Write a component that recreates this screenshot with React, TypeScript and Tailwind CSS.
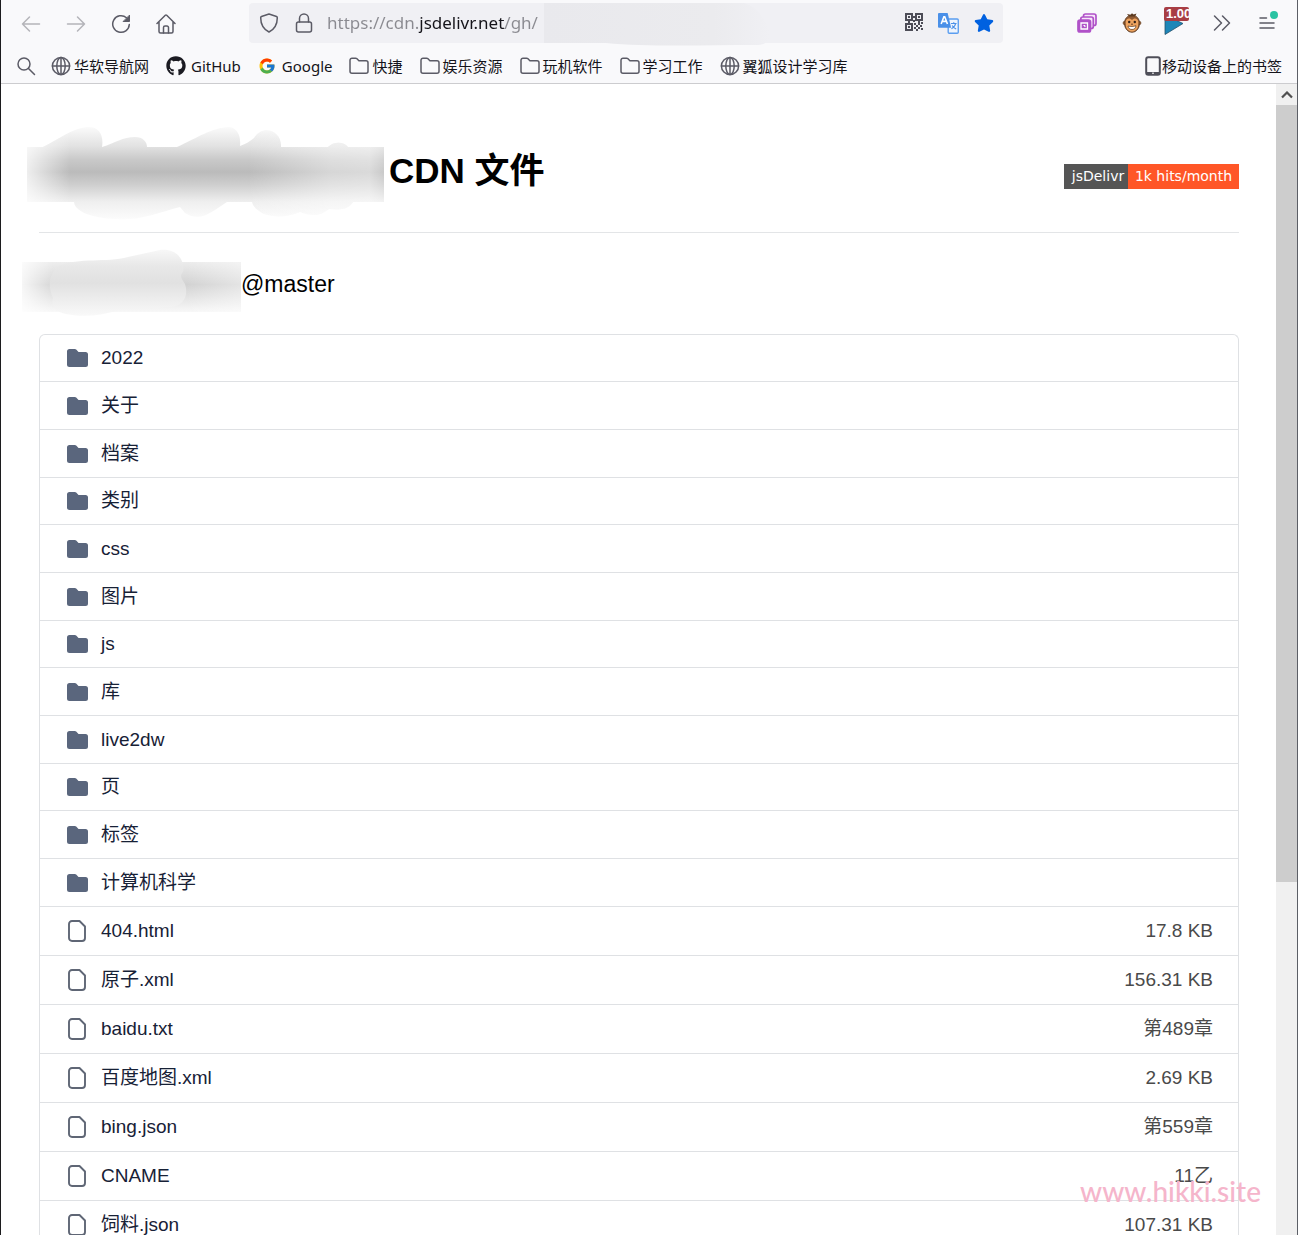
import type { ReactNode } from "react";
import { FaGithub, FaStar } from "react-icons/fa";
import { FcGoogle } from "react-icons/fc";

type IconProps = { children: ReactNode; className?: string };

function Icon({ children, className = "" }: IconProps) {
  return (
    <svg
      viewBox="0 0 20 20"
      aria-hidden="true"
      fill="none"
      stroke="currentColor"
      strokeWidth="1.5"
      strokeLinecap="round"
      strokeLinejoin="round"
      className={`size-5 shrink-0 ${className}`}
    >
      {children}
    </svg>
  );
}

function ToolButton({ label, muted, children }: { label: string; muted?: boolean; children: ReactNode }) {
  return (
    <button
      type="button"
      aria-label={label}
      className={`flex h-10 w-[45px] shrink-0 items-center justify-center ${muted ? "text-[#b4b4b9]" : "text-[#5b5b66]"}`}
    >
      {children}
    </button>
  );
}

function GlobeIcon() {
  return (
    <Icon>
      <circle cx="10" cy="10" r="8.6" />
      <ellipse cx="10" cy="10" rx="4.2" ry="8.6" />
      <path d="M1.4 10h17.2M10 1.4v17.2" />
    </Icon>
  );
}

function FolderOutline() {
  return (
    <Icon>
      <path d="M1 4.200A2 2 0 0 1 3 2.200h3.600c.5 0 1 .2 1.400.6l1.900 1.900H17a2 2 0 0 1 2 2v8.600a2 2 0 0 1-2 2H3a2 2 0 0 1-2-2z" />
    </Icon>
  );
}

function QrIcon() {
  return (
    <svg viewBox="0 0 18 18" aria-hidden="true" className="size-[18px]" fill="#4d4d57">
      <path fillRule="evenodd" d="M0 0h8v8H0zM2 2v4h4V2zM10 0h8v8h-8zM12 2v4h4V2zM0 10h8v8H0zM2 12v4h4v-4z" />
      <path d="M3 3h2v2H3zM13 3h2v2h-2zM3 13h2v2H3zM8 3h2v2H8zM8 7h2v2H8zM3 8h2v2H3zM13 8h2v2h-2zM9 10h2v2H9zM13 10h2v2h-2zM16 9h2v2h-2zM11 12h2v2h-2zM15 12h2v2h-2zM9 14h2v2H9zM13 14h2v2h-2zM11 16h2v2h-2zM16 15h2v2h-2z" />
    </svg>
  );
}

function TranslateIcon() {
  return (
    <svg viewBox="0 0 20 20" aria-hidden="true" className="size-[21px]" fill="none">
      <rect x="9.7" y="5.7" width="9.6" height="13.6" rx="1" fill="#eef4fd" stroke="#5a9df0" strokeWidth="1.3" />
      <path d="M1 0h8.200L12.500 14H1a1 1 0 0 1-1-1V1a1 1 0 0 1 1-1z" fill="#4a90e8" />
      <path d="m3 10.500 2.600-7h.8l2.600 7M4 8h4" stroke="#fff" strokeWidth="1.5" />
      <path d="M12.300 10h5.400M15 8.700V10M16.800 10c-.5 2.400-2 4-4 5M13.500 12c.8 1.500 2 2.600 3.800 3.300" stroke="#4a90e8" strokeWidth="1.1" />
    </svg>
  );
}

function WindowsIcon() {
  return (
    <svg viewBox="0 0 20 20" aria-hidden="true" className="size-5" fill="#f7e6fa" stroke="#b052c8" strokeWidth="1.700">
      <rect x="6.500" y="1" width="12.500" height="11.500" rx="2" />
      <rect x="3.800" y="4" width="12.500" height="11.500" rx="2" />
      <rect x="1" y="7" width="12.500" height="12" rx="2" fill="#b052c8" />
      <path d="M4 10h6.500v6H4z" fill="#b052c8" stroke="#fff" strokeWidth="1.300" />
      <path d="M6.500 12.500h1.500v1.500" stroke="#fff" strokeWidth="1" />
    </svg>
  );
}

function MonkeyIcon() {
  return (
    <svg viewBox="0 0 20 20" aria-hidden="true" className="size-5">
      <circle cx="2.800" cy="10" r="1.700" fill="#c98748" stroke="#5c3a20" strokeWidth=".8" />
      <circle cx="17.200" cy="10" r="1.700" fill="#c98748" stroke="#5c3a20" strokeWidth=".8" />
      <path d="M10 2.200c4.800 0 7.500 3.600 7.500 8.300 0 5-3.500 8.800-7.500 8.800s-7.500-3.800-7.500-8.800c0-4.700 2.700-8.300 7.500-8.300z" fill="#8f5a32" stroke="#5c3a20" strokeWidth=".8" />
      <path d="M7 3.500 5 1l3.500.8L10 .2l1.500 1.400L14.500.6 13 3.500z" fill="#5c3a20" />
      <path d="M10 7C8 4.200 3.700 5.200 3.700 9c0 1.500.2 2 .2 3.500C4 16 7 18.500 10 18.500s6-2.500 6.100-6c0-1.500.2-2 .2-3.500 0-3.800-4.300-4.800-6.300-2z" fill="#eda35f" />
      <circle cx="7.200" cy="9" r="1.200" fill="#33231a" />
      <circle cx="12.800" cy="9" r="1.200" fill="#33231a" />
      <path d="M9 11.200h2" stroke="#5c3a20" strokeWidth=".9" />
      <path d="M6 13c2.500.7 5.500.7 8-.3-.3 2.600-1.800 3.800-4 3.800s-3.700-1.200-4-3.500z" fill="#fff" stroke="#5c3a20" strokeWidth=".7" />
    </svg>
  );
}

function SpeedIcon() {
  return (
    <span className="relative flex h-10 w-[25px] items-center">
      <svg viewBox="0 0 20 22" aria-hidden="true" className="mt-1 h-[22px] w-5">
        <path d="M1 1v19.500L19 9.500z" fill="#1d86b8" stroke="#24506b" strokeWidth=".8" />
      </svg>
      <span className="absolute left-0 top-1 h-[14px] w-[25px] overflow-hidden rounded-[2px] bg-[#a83e44] pl-[2px] text-left font-['Liberation_Sans'] text-[13px] font-bold leading-[14px] text-white">
        1.00
      </span>
    </span>
  );
}

function UrlSmear() {
  return (
    <svg viewBox="0 0 228 44" aria-hidden="true" className="absolute left-[295px] top-0 h-[44px] w-[228px]">
      <defs>
        <linearGradient id="urlFade" x1="0" x2="1">
          <stop offset="0" stopColor="#e9e9ed" />
          <stop offset=".75" stopColor="#ebebee" />
          <stop offset="1" stopColor="#f0f0f4" />
        </linearGradient>
      </defs>
      <path d="M0 0h200c14 4 20 16 26 28 2 10-4 14-14 14-50 0-110 2-150-2H0z" fill="url(#urlFade)" />
    </svg>
  );
}

const titleMarks =
  "M0 22H16C32 14 44 4 60 2c12-1 17 8 15 20C88 18 96 12 108 12c8 0 12 5 12 10h30C172 12 184 3 202 2c9 1 12 10 11 19 6-2 10-5 14-8 8-14 28-8 27 9h47c5-5 15-6 20 0h36v55h-31c-5 8-14 8-24 7-10 8-18 7-29 3-12 5-24 6-36 2-7-4-11-7-12-12h-25c-14 9-26 21-42 11L153 82C130 88 112 96 90 94c-16 0-42-5-43-17H0z";

function TitleSmear() {
  return (
    <svg viewBox="0 0 357 98" aria-hidden="true" className="mt-[6px] h-[98px] w-[357px] shrink-0">
      <defs>
        <linearGradient id="titleShade" gradientUnits="userSpaceOnUse" x1="0" y1="0" x2="0" y2="96">
          <stop offset="0" stopColor="#fdfdfd" />
          <stop offset=".22" stopColor="#e2e2e2" />
          <stop offset=".36" stopColor="#c9c9c9" />
          <stop offset=".49" stopColor="#bbbbbb" />
          <stop offset=".62" stopColor="#cecece" />
          <stop offset=".8" stopColor="#efefef" />
          <stop offset="1" stopColor="#fdfdfd" />
        </linearGradient>
        <linearGradient id="titleEdge" x1="0" x2="1">
          <stop offset="0" stopColor="#fff" stopOpacity=".75" />
          <stop offset=".12" stopColor="#fff" stopOpacity="0" />
          <stop offset=".62" stopColor="#fff" stopOpacity="0" />
          <stop offset=".85" stopColor="#fff" stopOpacity=".4" />
          <stop offset=".96" stopColor="#fff" stopOpacity=".45" />
          <stop offset="1" stopColor="#fff" stopOpacity=".2" />
        </linearGradient>
      </defs>
      <path d={titleMarks} fill="url(#titleShade)" />
      <path d={titleMarks} fill="url(#titleEdge)" />
    </svg>
  );
}

function BranchSmear() {
  return (
    <svg viewBox="0 0 219 70" aria-hidden="true" className="h-[70px] w-[219px] shrink-0">
      <defs>
        <linearGradient id="branchShade" x1="0" y1="0" x2="0" y2="1">
          <stop offset="0" stopColor="#ececec" />
          <stop offset=".45" stopColor="#d2d2d2" />
          <stop offset="1" stopColor="#f8f8f8" />
        </linearGradient>
        <linearGradient id="branchEdge" x1="0" x2="1">
          <stop offset="0" stopColor="#fff" stopOpacity=".8" />
          <stop offset=".14" stopColor="#fff" stopOpacity=".1" />
          <stop offset=".75" stopColor="#fff" stopOpacity="0" />
          <stop offset="1" stopColor="#fff" stopOpacity=".4" />
        </linearGradient>
        <linearGradient id="branchBlob" gradientUnits="userSpaceOnUse" x1="0" y1="0" x2="0" y2="68">
          <stop offset="0" stopColor="#f8f8f8" />
          <stop offset=".25" stopColor="#e8e8e8" />
          <stop offset=".5" stopColor="#e1e1e1" />
          <stop offset="1" stopColor="#fafafa" />
        </linearGradient>
      </defs>
      <path d="M0 13h219v50H0z" fill="url(#branchShade)" />
      <path d="M0 13h219v50H0z" fill="url(#branchEdge)" />
      <path d="M36 17C58 8 84 14 106 8l32-7c16-2 25 9 23 22-4 4-1 7 2 12 4 12-2 22-14 23l-51 3c-18 5-34 8-54 4-10-2-16-8-13-16-5-11-5-22 5-32z" fill="url(#branchBlob)" />
    </svg>
  );
}

const bookmarks: { label: string; icon: ReactNode; gap: string }[] = [
  { label: "华软导航网", icon: <GlobeIcon />, gap: "gap-[3px]" },
  { label: "GitHub", icon: <FaGithub aria-hidden="true" className="size-5 text-[#1b1b22]" />, gap: "gap-[5px]" },
  { label: "Google", icon: <FcGoogle aria-hidden="true" className="size-[18px]" />, gap: "gap-[6px]" },
  { label: "快捷", icon: <FolderOutline />, gap: "gap-[3px]" },
  { label: "娱乐资源", icon: <FolderOutline />, gap: "gap-[3px]" },
  { label: "玩机软件", icon: <FolderOutline />, gap: "gap-[3px]" },
  { label: "学习工作", icon: <FolderOutline />, gap: "gap-[3px]" },
  { label: "翼狐设计学习库", icon: <GlobeIcon />, gap: "gap-[3px]" },
];

const folders = ["2022", "关于", "档案", "类别", "css", "图片", "js", "库", "live2dw", "页", "标签", "计算机科学"];

const files = [
  { name: "404.html", size: "17.8 KB" },
  { name: "原子.xml", size: "156.31 KB" },
  { name: "baidu.txt", size: "第489章" },
  { name: "百度地图.xml", size: "2.69 KB" },
  { name: "bing.json", size: "第559章" },
  { name: "CNAME", size: "11乙" },
  { name: "饲料.json", size: "107.31 KB" },
];

function Toolbar() {
  return (
    <div className="flex h-12 items-start pl-[7px] pr-2">
      <nav aria-label="导航" className="flex pt-1">
        <ToolButton label="后退" muted>
          <Icon><path d="M18.500 10h-17M8.500 3l-7 7 7 7" /></Icon>
        </ToolButton>
        <ToolButton label="前进" muted>
          <Icon><path d="M1.500 10h17M11.500 3l7 7-7 7" /></Icon>
        </ToolButton>
        <ToolButton label="刷新">
          <Icon>
            <path d="M18.300 10.500A8.300 8.300 0 1 1 15.500 3.800" />
            <path d="M18.500 1.500v6h-6z" fill="currentColor" strokeWidth="1" />
          </Icon>
        </ToolButton>
        <ToolButton label="主页">
          <Icon>
            <path d="M1 9.500 9.300 1.300a1 1 0 0 1 1.400 0L19 9.500M3 8v9.500a1.500 1.500 0 0 0 1.500 1.500h11a1.500 1.500 0 0 0 1.500-1.500V8" />
            <path d="M7.500 19v-5.500a1.500 1.500 0 0 1 1.500-1.500h2a1.500 1.500 0 0 1 1.500 1.500V19" />
          </Icon>
        </ToolButton>
      </nav>
      <div className="relative ml-[61px] mt-[3px] flex h-10 flex-1 items-center rounded-[4px] bg-[#f0f0f4] pl-[10px] pr-[2px] text-[#5b5b66]">
        <Icon><path d="M10 1 17.500 3.500a1.200 1.200 0 0 1 .8 1.200c0 6.800-3 11.600-8.300 14.300C4.700 16.300 1.700 11.500 1.700 4.700a1.200 1.200 0 0 1 .8-1.200z" /></Icon>
        <Icon className="ml-[15px]">
          <rect x="2.500" y="9" width="15" height="10" rx="2" />
          <path d="M5.500 9V5.500a4.500 4.500 0 0 1 9 0V9" />
        </Icon>
        <UrlSmear />
        <input
          aria-label="地址"
          defaultValue="https://cdn.jsdelivr.net/gh/"
          className="relative ml-[13px] min-w-0 flex-1 bg-[linear-gradient(to_right,#8a8a90_92px,#15141a_92px,#15141a_178px,#8a8a90_178px)] bg-clip-text font-['Noto_Sans'] text-[17px] leading-[26px] text-transparent outline-none"
        />
        <div className="flex">
          <button type="button" aria-label="二维码" className="flex w-[35px] justify-center"><QrIcon /></button>
          <button type="button" aria-label="翻译" className="flex w-[35px] justify-center"><TranslateIcon /></button>
          <button type="button" aria-label="收藏" className="flex w-[35px] justify-center text-[#0061e0]"><FaStar className="size-5" /></button>
        </div>
      </div>
      <div className="ml-[61px] flex pt-[3px]">
        <ToolButton label="窗口"><WindowsIcon /></ToolButton>
        <ToolButton label="脚本"><MonkeyIcon /></ToolButton>
        <ToolButton label="播放速度"><SpeedIcon /></ToolButton>
        <ToolButton label="更多">
          <Icon><path d="m2.500 3 7 7-7 7M10.500 3l7 7-7 7" /></Icon>
        </ToolButton>
        <ToolButton label="菜单">
          <span className="relative">
            <Icon><path d="M3 5h6.500M3 10h14M3 15h14" /></Icon>
            <span className="absolute -right-[1px] -top-[2px] size-2 rounded-full bg-[#2ac3a2]" />
          </span>
        </ToolButton>
      </div>
    </div>
  );
}

function BookmarkBar() {
  return (
    <div className="flex h-9 items-center border-b border-[#cccccf] px-[15px] font-['Noto_Sans','Noto_Sans_CJK_SC',sans-serif] text-[15px] leading-5 text-[#15141a]">
      <button type="button" aria-label="搜索" className="mr-[15px] text-[#5b5b66]">
        <Icon><circle cx="8" cy="8" r="6" /><path d="m12.500 12.500 6 6" /></Icon>
      </button>
      <div className="flex flex-1 items-center gap-[17px]">
        {bookmarks.map((b) => (
          <a key={b.label} href="#" className={`flex items-center whitespace-nowrap ${b.gap}`}>
            <span className="text-[#5b5b66]">{b.icon}</span>
            {b.label}
          </a>
        ))}
      </div>
      <a href="#" className="flex items-center whitespace-nowrap">
        <svg viewBox="0 0 16 20" aria-hidden="true" className="mr-px h-5 w-4" fill="none">
          <rect x="1.200" y="1.200" width="13.600" height="17.600" rx="2" stroke="#4f4f59" strokeWidth="2" />
          <path d="M1.500 16h13v2.500h-13z" fill="#4f4f59" />
          <path d="M7 17.200h2" stroke="#fff" strokeWidth="1" />
        </svg>
        移动设备上的书签
      </a>
    </div>
  );
}

function FileTable() {
  return (
    <div className="overflow-hidden rounded-t-[6px] border border-b-0 border-[#dfe1e4]">
      <table className="w-full border-separate border-spacing-0 text-[19px] leading-6">
        <tbody>
          {folders.map((name, i) => (
            <tr key={name}>
              <td colSpan={2} className={`border-b border-[#dfe1e4] p-0 pl-[27px] ${i % 3 ? "h-12" : "h-[47px]"}`}>
                <a href="#" className="flex items-center gap-[13px] text-[#172136]">
                  <svg viewBox="0 0 21 18" aria-hidden="true" className="h-[18px] w-[21px]" fill="#5a667d">
                    <path d="M2.500 0h5.200a2 2 0 0 1 1.500.6L11.500 3h7A2.500 2.500 0 0 1 21 5.500v10a2.500 2.500 0 0 1-2.500 2.500h-16A2.500 2.500 0 0 1 0 15.500v-13A2.500 2.500 0 0 1 2.500 0z" />
                  </svg>
                  {name}
                </a>
              </td>
            </tr>
          ))}
          {files.map((f) => (
            <tr key={f.name}>
              <td className="h-[49px] border-b border-[#dfe1e4] p-0 pl-[27px]">
                <a href="#" className="flex items-center gap-[13px] text-[#172136]">
                  <svg viewBox="0 0 21 22" aria-hidden="true" className="h-[22px] w-[21px]" fill="none" stroke="#5f6675" strokeWidth="1.900">
                    <path d="M5 1h7.500L18 6.500V18a3 3 0 0 1-3 3H5a3 3 0 0 1-3-3V4a3 3 0 0 1 3-3z" strokeLinejoin="round" />
                  </svg>
                  {f.name}
                </a>
              </td>
              <td className="h-[49px] border-b border-[#dfe1e4] p-0 pr-[25px] text-right text-[#4a4a4a]">{f.size}</td>
            </tr>
          ))}
        </tbody>
      </table>
    </div>
  );
}

export default function App() {
  return (
    <div className="relative flex h-screen flex-col overflow-hidden border-l border-r border-l-[#1c1c1e] border-r-[#5c5f66] bg-white">
      <header className="bg-[#f9f9fb]">
        <Toolbar />
        <BookmarkBar />
      </header>
      <div className="flex min-h-0 flex-1">
        <main className="min-w-0 flex-1 overflow-hidden pl-[38px] pr-[37px] font-['Liberation_Sans','Noto_Sans_CJK_SC',sans-serif] text-black">
          <div className="flex h-[149px] items-center justify-between border-b border-[#e3e5e7] pt-[25px]">
            <h1 className="-ml-3 flex items-center gap-[5px] text-[35px] font-bold leading-[42px]">
              <TitleSmear />
              CDN 文件
            </h1>
            <a href="#" className="mt-3 flex h-[25px] font-['DejaVu_Sans'] text-[14px] leading-[25px] text-white">
              <span className="w-16 bg-[#555555] pl-1 text-center">jsDelivr</span>
              <span className="w-[111px] bg-[#ff5627] text-center">1k hits/month</span>
            </a>
          </div>
          <h2 className="-ml-[17px] flex h-[101px] items-center text-[23px] leading-7">
            <BranchSmear />
            @master
          </h2>
          <FileTable />
        </main>
        <div aria-hidden="true" className="flex w-[21px] flex-col bg-[#f0f0f0]">
          <div className="flex h-[21px] items-center justify-center text-[#505050]">
            <svg viewBox="0 0 12 8" className="h-2 w-3" fill="none" stroke="currentColor" strokeWidth="2.200">
              <path d="m1 6.500 5-5 5 5" />
            </svg>
          </div>
          <div className="h-[67.500%] bg-[#cdcdcd]" />
        </div>
      </div>
      <div className="absolute bottom-[26px] right-9 font-['Lato'] text-[28px] font-medium leading-9 text-[#f5b5cb]">www.hikki.site</div>
    </div>
  );
}
